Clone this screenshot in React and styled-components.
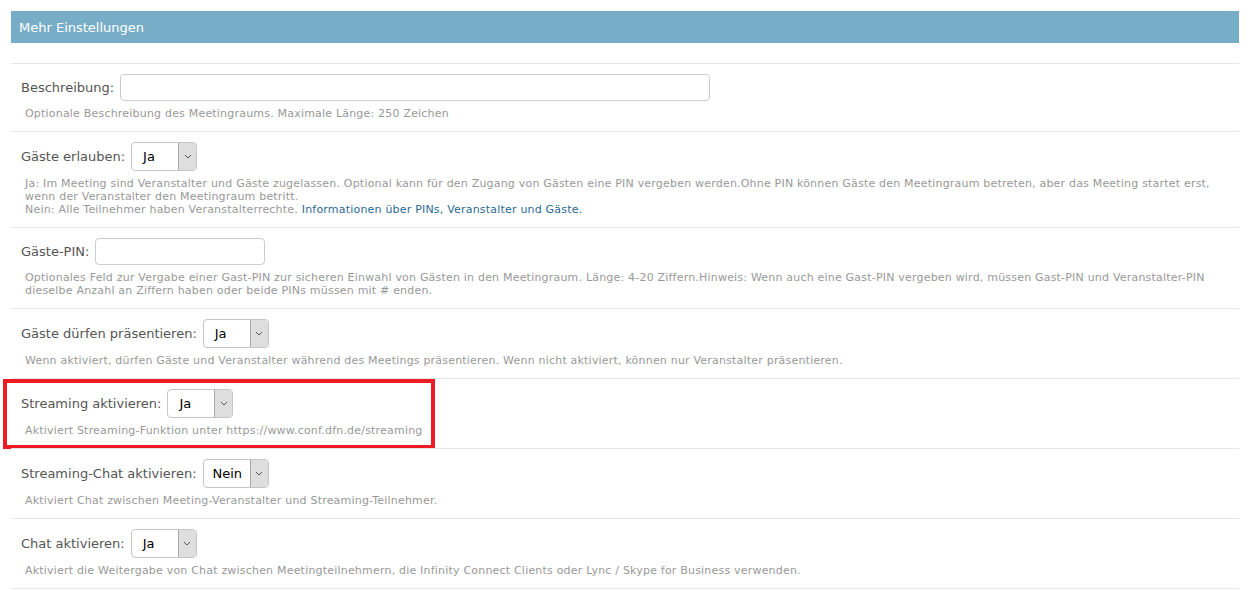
import React from 'react';
import styled, { createGlobalStyle } from 'styled-components';

const GlobalStyle = createGlobalStyle`
  body {
    margin: 0;
    padding: 11px 12px 0 11px;
    background: #fff;
    font-family: 'DejaVu Sans', Verdana, sans-serif;
  }
`;

const Header = styled.div`
  height: 32px;
  background: #78adc8;
  color: #fff;
  font-size: 13px;
  display: flex;
  align-items: center;
  padding-left: 8px;
  margin-bottom: 20px;
`;

const List = styled.div`
  border-bottom: 1px solid #e6e6e6;
`;

const Row = styled.div`
  position: relative;
  border-top: 1px solid #e6e6e6;
  padding: 10px 10px 11px;
`;

const FieldLine = styled.div`
  display: flex;
  align-items: center;
  gap: 6px;
`;

const Label = styled.label`
  font-size: 13px;
  color: #555;
`;

const TextInput = styled.div`
  width: ${p => p.$width}px;
  height: 27px;
  box-sizing: border-box;
  border: 1px solid #ccc;
  border-radius: 4px;
  background: #fff;
`;

const SelectBox = styled.div`
  width: 66px;
  height: 29px;
  box-sizing: border-box;
  border: 1px solid #c6c6c6;
  border-radius: 4px;
  display: flex;
  overflow: hidden;
  background: #fff;
`;

const SelectValue = styled.span`
  flex: 1;
  display: flex;
  align-items: center;
  padding-left: ${p => (p.$wide ? 9 : 11)}px;
  font-size: 13px;
  color: #000;
`;

const Arrow = styled.span`
  width: 17px;
  background: #dedede;
  border-left: 1px solid #a9a9a9;
  display: flex;
  align-items: center;
  justify-content: center;
`;

const Help = styled.div`
  margin-top: 6px;
  padding-left: 4px;
  font-size: 11px;
  line-height: 13px;
  letter-spacing: 0.2px;
  color: #999;
  white-space: nowrap;
`;

const HelpLink = styled.a`
  color: #2b6a94;
  text-decoration: none;
`;

const Highlight = styled.div`
  position: absolute;
  top: 0;
  left: -8px;
  width: 432px;
  height: 70px;
  box-sizing: border-box;
  border: 4px solid #ed1c24;
  pointer-events: none;
`;

const Select = ({ value }) => (
  <SelectBox>
    <SelectValue $wide={value.length > 2}>{value}</SelectValue>
    <Arrow>
      <svg width="8" height="5" viewBox="0 0 8 5">
        <path d="M1 1l3 3 3-3" fill="none" stroke="#555" strokeWidth="1" />
      </svg>
    </Arrow>
  </SelectBox>
);

const App = () => (
  <>
    <GlobalStyle />
    <Header>Mehr Einstellungen</Header>
    <List>
      <Row>
        <FieldLine>
          <Label>Beschreibung:</Label>
          <TextInput $width={590} />
        </FieldLine>
        <Help>Optionale Beschreibung des Meetingraums. Maximale Länge: 250 Zeichen</Help>
      </Row>
      <Row>
        <FieldLine>
          <Label>Gäste erlauben:</Label>
          <Select value="Ja" />
        </FieldLine>
        <Help>
          Ja: Im Meeting sind Veranstalter und Gäste zugelassen. Optional kann für den Zugang von Gästen eine PIN vergeben werden.Ohne PIN können Gäste den Meetingraum betreten, aber das Meeting startet erst,
          <br />
          wenn der Veranstalter den Meetingraum betritt.
          <br />
          Nein: Alle Teilnehmer haben Veranstalterrechte.{' '}
          <HelpLink href="#">Informationen über PINs, Veranstalter und Gäste.</HelpLink>
        </Help>
      </Row>
      <Row>
        <FieldLine>
          <Label>Gäste-PIN:</Label>
          <TextInput $width={170} />
        </FieldLine>
        <Help>
          Optionales Feld zur Vergabe einer Gast-PIN zur sicheren Einwahl von Gästen in den Meetingraum. Länge: 4-20 Ziffern.Hinweis: Wenn auch eine Gast-PIN vergeben wird, müssen Gast-PIN und Veranstalter-PIN
          <br />
          dieselbe Anzahl an Ziffern haben oder beide PINs müssen mit # enden.
        </Help>
      </Row>
      <Row>
        <FieldLine>
          <Label>Gäste dürfen präsentieren:</Label>
          <Select value="Ja" />
        </FieldLine>
        <Help>Wenn aktiviert, dürfen Gäste und Veranstalter während des Meetings präsentieren. Wenn nicht aktiviert, können nur Veranstalter präsentieren.</Help>
      </Row>
      <Row>
        <FieldLine>
          <Label>Streaming aktivieren:</Label>
          <Select value="Ja" />
        </FieldLine>
        <Help>Aktiviert Streaming-Funktion unter https://www.conf.dfn.de/streaming</Help>
        <Highlight />
      </Row>
      <Row>
        <FieldLine>
          <Label>Streaming-Chat aktivieren:</Label>
          <Select value="Nein" />
        </FieldLine>
        <Help>Aktiviert Chat zwischen Meeting-Veranstalter und Streaming-Teilnehmer.</Help>
      </Row>
      <Row>
        <FieldLine>
          <Label>Chat aktivieren:</Label>
          <Select value="Ja" />
        </FieldLine>
        <Help>Aktiviert die Weitergabe von Chat zwischen Meetingteilnehmern, die Infinity Connect Clients oder Lync / Skype for Business verwenden.</Help>
      </Row>
    </List>
  </>
);

export default App;
